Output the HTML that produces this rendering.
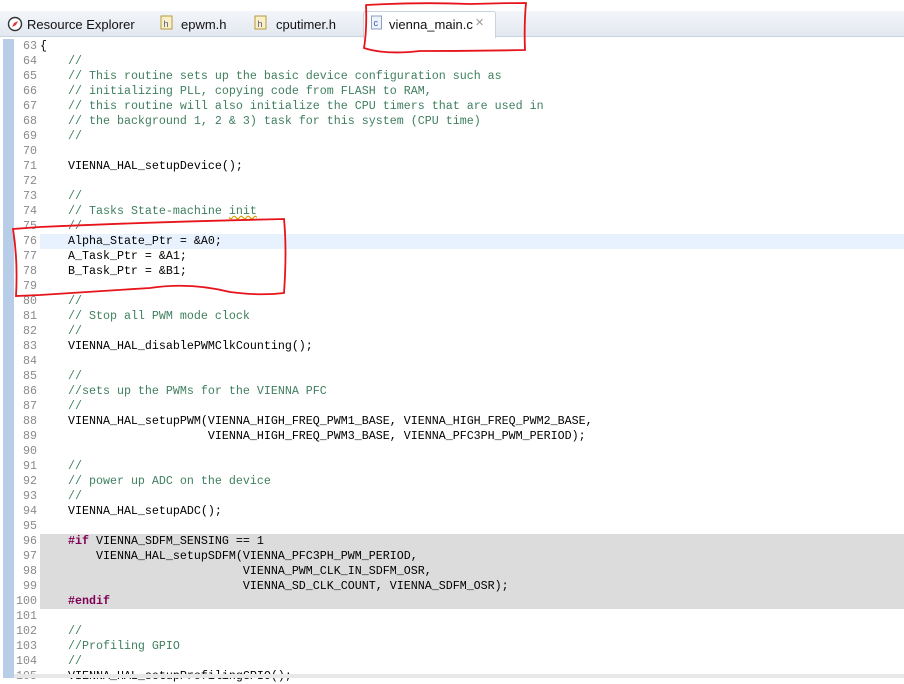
<!DOCTYPE html>
<html><head><meta charset="utf-8"><style>
body{margin:0;width:904px;height:678px;overflow:hidden;background:#fff;position:relative;font-family:"Liberation Sans",sans-serif}
.tabbar{position:absolute;left:0;top:11px;width:904px;height:25px;background:linear-gradient(#f3f6fa,#e3e8f0);border-bottom:1px solid #c9d3e0}
.tab{position:absolute;top:4px;font-size:13px;color:#111}
.act{position:absolute;left:363px;top:11px;width:131px;height:26px;background:#fff;border:1px solid #c9d3e0;border-bottom:none;border-radius:3px 3px 0 0}
.gut{position:absolute;left:3px;top:39px;width:11px;height:639px;background-color:#9dbbe0;background-image:radial-gradient(#fff 0.6px,transparent 0.8px);background-size:2px 2px}
.code{position:absolute;left:0;top:39px;width:904px;font-family:"Liberation Mono",monospace;font-size:11.67px}
.l{height:15px;line-height:15px;position:relative;white-space:pre}
.n{position:absolute;left:14px;width:23px;text-align:right;color:#8a8a8a}
.t{position:absolute;left:40px;color:#000}
.c{color:#3f7f5f}
.k{color:#7f0055;font-weight:bold}
.hl{background:linear-gradient(90deg,transparent 40px,#e8f2fe 40px)}
.pp{background:linear-gradient(90deg,transparent 40px,#dcdcdc 40px)}
.sb{position:absolute;left:14px;top:674px;width:890px;height:4px;background:#e8e8e8}
</style></head><body>
<div class="tabbar"></div>
<div class="act"></div>
<svg style="position:absolute;left:7px;top:16px" width="16" height="16"><circle cx="8" cy="8" r="6.5" fill="#fff" stroke="#333" stroke-width="1.4"/><path d="M11 5 L7 7 L5 11 L9 9 Z" fill="#d33"/></svg>
<div class="tab" style="left:27px;top:17px">Resource Explorer</div>
<svg style="position:absolute;left:160px;top:15px" width="14" height="15"><rect x="1" y="1" width="11" height="13" fill="#f8f0c8" stroke="#b89a40"/><text x="3.5" y="12" font-size="9" font-family="Liberation Sans" fill="#557">h</text></svg>
<div class="tab" style="left:181px;top:17px">epwm.h</div>
<svg style="position:absolute;left:254px;top:15px" width="14" height="15"><rect x="1" y="1" width="11" height="13" fill="#f8f0c8" stroke="#b89a40"/><text x="3.5" y="12" font-size="9" font-family="Liberation Sans" fill="#557">h</text></svg>
<div class="tab" style="left:276px;top:17px">cputimer.h</div>
<svg style="position:absolute;left:371px;top:15px" width="12" height="15"><rect x="0.5" y="1" width="10" height="13" fill="#eef3fb" stroke="#8aa0c0"/><text x="2.5" y="11" font-size="9" font-family="Liberation Sans" fill="#35a">c</text></svg>
<div class="tab" style="left:389px;top:17px">vienna_main.c</div>
<div class="tab" style="left:475px;top:16px;color:#999;font-size:11px">✕</div>
<div class="gut"></div>
<div class="code">
<div class="l"><span class="n">63</span><span class="t">{</span></div>
<div class="l"><span class="n">64</span><span class="t">    <span class="c">//</span></span></div>
<div class="l"><span class="n">65</span><span class="t">    <span class="c">// This routine sets up the basic device configuration such as</span></span></div>
<div class="l"><span class="n">66</span><span class="t">    <span class="c">// initializing PLL, copying code from FLASH to RAM,</span></span></div>
<div class="l"><span class="n">67</span><span class="t">    <span class="c">// this routine will also initialize the CPU timers that are used in</span></span></div>
<div class="l"><span class="n">68</span><span class="t">    <span class="c">// the background 1, 2 &amp; 3) task for this system (CPU time)</span></span></div>
<div class="l"><span class="n">69</span><span class="t">    <span class="c">//</span></span></div>
<div class="l"><span class="n">70</span></div>
<div class="l"><span class="n">71</span><span class="t">    VIENNA_HAL_setupDevice();</span></div>
<div class="l"><span class="n">72</span></div>
<div class="l"><span class="n">73</span><span class="t">    <span class="c">//</span></span></div>
<div class="l"><span class="n">74</span><span class="t">    <span class="c">// Tasks State-machine <u style="text-decoration-style:wavy;text-decoration-color:#d6a000">init</u></span></span></div>
<div class="l"><span class="n">75</span><span class="t">    <span class="c">//</span></span></div>
<div class="l hl"><span class="n">76</span><span class="t">    Alpha_State_Ptr = &amp;A0;</span></div>
<div class="l"><span class="n">77</span><span class="t">    A_Task_Ptr = &amp;A1;</span></div>
<div class="l"><span class="n">78</span><span class="t">    B_Task_Ptr = &amp;B1;</span></div>
<div class="l"><span class="n">79</span></div>
<div class="l"><span class="n">80</span><span class="t">    <span class="c">//</span></span></div>
<div class="l"><span class="n">81</span><span class="t">    <span class="c">// Stop all PWM mode clock</span></span></div>
<div class="l"><span class="n">82</span><span class="t">    <span class="c">//</span></span></div>
<div class="l"><span class="n">83</span><span class="t">    VIENNA_HAL_disablePWMClkCounting();</span></div>
<div class="l"><span class="n">84</span></div>
<div class="l"><span class="n">85</span><span class="t">    <span class="c">//</span></span></div>
<div class="l"><span class="n">86</span><span class="t">    <span class="c">//sets up the PWMs for the VIENNA PFC</span></span></div>
<div class="l"><span class="n">87</span><span class="t">    <span class="c">//</span></span></div>
<div class="l"><span class="n">88</span><span class="t">    VIENNA_HAL_setupPWM(VIENNA_HIGH_FREQ_PWM1_BASE, VIENNA_HIGH_FREQ_PWM2_BASE,</span></div>
<div class="l"><span class="n">89</span><span class="t">                        VIENNA_HIGH_FREQ_PWM3_BASE, VIENNA_PFC3PH_PWM_PERIOD);</span></div>
<div class="l"><span class="n">90</span></div>
<div class="l"><span class="n">91</span><span class="t">    <span class="c">//</span></span></div>
<div class="l"><span class="n">92</span><span class="t">    <span class="c">// power up ADC on the device</span></span></div>
<div class="l"><span class="n">93</span><span class="t">    <span class="c">//</span></span></div>
<div class="l"><span class="n">94</span><span class="t">    VIENNA_HAL_setupADC();</span></div>
<div class="l"><span class="n">95</span></div>
<div class="l pp"><span class="n">96</span><span class="t">    <span class="k">#if</span> VIENNA_SDFM_SENSING == 1</span></div>
<div class="l pp"><span class="n">97</span><span class="t">        VIENNA_HAL_setupSDFM(VIENNA_PFC3PH_PWM_PERIOD,</span></div>
<div class="l pp"><span class="n">98</span><span class="t">                             VIENNA_PWM_CLK_IN_SDFM_OSR,</span></div>
<div class="l pp"><span class="n">99</span><span class="t">                             VIENNA_SD_CLK_COUNT, VIENNA_SDFM_OSR);</span></div>
<div class="l pp"><span class="n">100</span><span class="t">    <span class="k">#endif</span></span></div>
<div class="l"><span class="n">101</span></div>
<div class="l"><span class="n">102</span><span class="t">    <span class="c">//</span></span></div>
<div class="l"><span class="n">103</span><span class="t">    <span class="c">//Profiling GPIO</span></span></div>
<div class="l"><span class="n">104</span><span class="t">    <span class="c">//</span></span></div>
<div class="l"><span class="n">105</span><span class="t">    VIENNA_HAL_setupProfilingGPIO();</span></div>
</div>
<div class="sb"></div>
<svg style="position:absolute;left:0;top:0" width="904" height="678" fill="none" stroke="#e8141c" stroke-width="1.8" stroke-linecap="round">
<path d="M366 5 Q420 2 470 4 Q505 3 526 3 Q524 25 525 50 Q480 51 420 51 Q385 55 364 48 Q367 30 366 5"/>
<path d="M40 227 Q150 222 284 219 Q287 250 284 293 Q260 296 230 292 Q190 282 150 288 Q90 292 40 295 M40 227 L13 229 Q18 260 16 296 L40 295"/>
</svg>
</body></html>
